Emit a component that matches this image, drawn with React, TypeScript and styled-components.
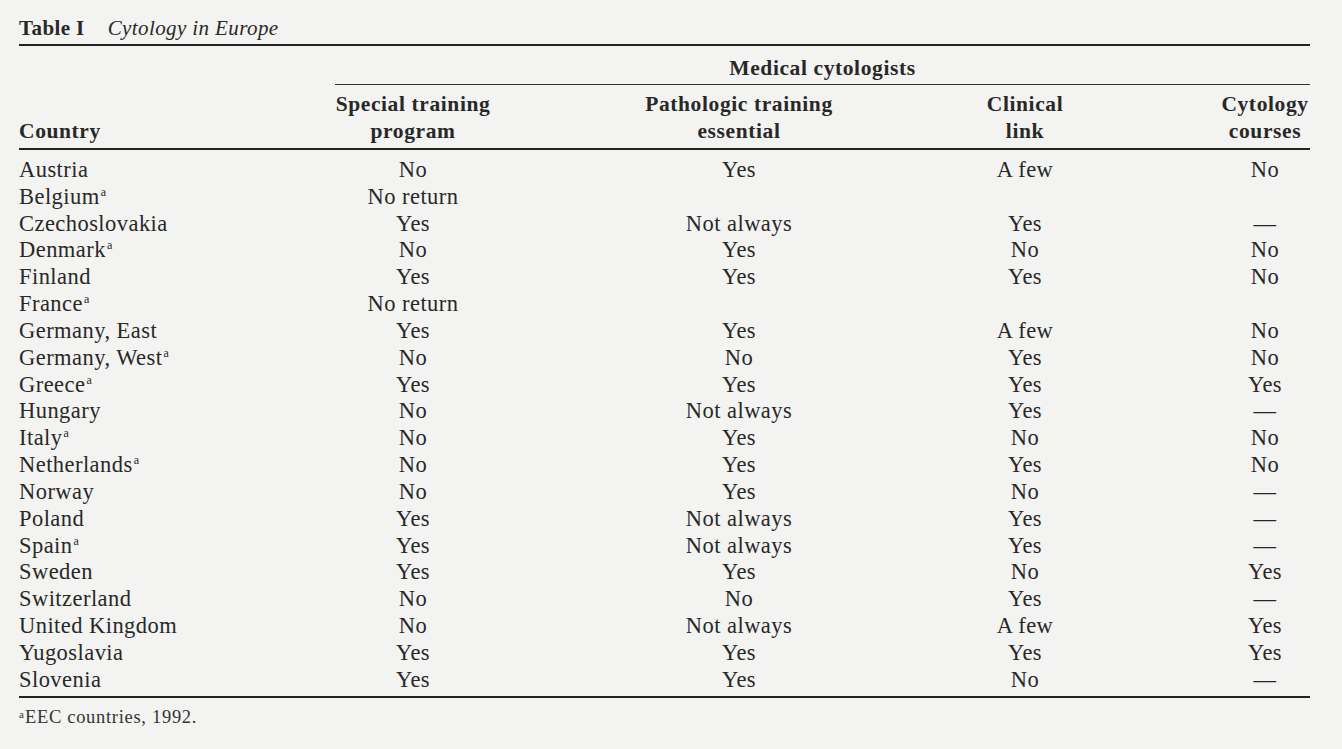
import React from "react";
import styled, { createGlobalStyle } from "styled-components";

const GlobalStyle = createGlobalStyle`
  html, body {
    margin: 0;
    padding: 0;
    background: #f3f3f1;
  }
  body {
    font-family: "Liberation Serif", "Times New Roman", serif;
    color: #282828;
  }
`;

const COLS = "294px 200px 452px 120px 225px";

const Page = styled.div`
  width: 1291px;
  padding: 16px 0 0 19px;
`;

const Caption = styled.div`
  font-size: 21px;
  line-height: 24px;
  letter-spacing: 0.4px;
  margin-bottom: 4px;
  b {
    font-weight: 700;
    margin-right: 23px;
  }
  i {
    font-style: italic;
  }
`;

const Table = styled.div`
  border-top: 2px solid #222;
  border-bottom: 2px solid #222;
`;

const SpanRow = styled.div`
  display: grid;
  grid-template-columns: ${COLS};
`;

const SpanHead = styled.div`
  grid-column: 2 / 6;
  margin-left: 22px;
  padding: 9px 0 2px;
  line-height: 27px;
  font-size: 21.5px;
  letter-spacing: 0.6px;
  font-weight: 700;
  text-align: center;
  border-bottom: 1px solid #333;
`;

const HeadRow = styled.div`
  display: grid;
  grid-template-columns: ${COLS};
  padding: 6px 0 3px;
  border-bottom: 2px solid #222;
  font-size: 21.5px;
  letter-spacing: 0.6px;
  font-weight: 700;
  line-height: 27px;
`;

const Body = styled.div`
  padding: 7px 0 2px;
`;

const Row = styled.div`
  display: grid;
  grid-template-columns: ${COLS};
  font-size: 22.5px;
  letter-spacing: 0.45px;
  line-height: 26.84px;
  height: 26.84px;
`;

const Cell = styled.div<{ $pos?: "left" | "center" | "end" }>`
  white-space: nowrap;
  text-align: ${(p) => (p.$pos === "left" ? "left" : "center")};
  align-self: end;
  ${(p) =>
    p.$pos === "end"
      ? `justify-self: end; min-width: 90px;`
      : ""}
`;

const Sup = styled.sup`
  font-size: 12px;
  line-height: 0;
  vertical-align: 0;
  position: relative;
  top: -8px;
  margin-left: 1px;
  letter-spacing: 0;
`;

const Footnote = styled.div`
  margin-top: 9px;
  font-size: 18.5px;
  letter-spacing: 0.7px;
  line-height: 20px;
  color: #333;
`;

const FootSup = styled.sup`
  font-size: 11px;
  line-height: 0;
  vertical-align: 0;
  position: relative;
  top: -5px;
  margin-right: 1px;
  letter-spacing: 0;
`;

type R = [string, boolean, string, string, string, string];

const rows: R[] = [
  ["Austria", false, "No", "Yes", "A few", "No"],
  ["Belgium", true, "No return", "", "", ""],
  ["Czechoslovakia", false, "Yes", "Not always", "Yes", "—"],
  ["Denmark", true, "No", "Yes", "No", "No"],
  ["Finland", false, "Yes", "Yes", "Yes", "No"],
  ["France", true, "No return", "", "", ""],
  ["Germany, East", false, "Yes", "Yes", "A few", "No"],
  ["Germany, West", true, "No", "No", "Yes", "No"],
  ["Greece", true, "Yes", "Yes", "Yes", "Yes"],
  ["Hungary", false, "No", "Not always", "Yes", "—"],
  ["Italy", true, "No", "Yes", "No", "No"],
  ["Netherlands", true, "No", "Yes", "Yes", "No"],
  ["Norway", false, "No", "Yes", "No", "—"],
  ["Poland", false, "Yes", "Not always", "Yes", "—"],
  ["Spain", true, "Yes", "Not always", "Yes", "—"],
  ["Sweden", false, "Yes", "Yes", "No", "Yes"],
  ["Switzerland", false, "No", "No", "Yes", "—"],
  ["United Kingdom", false, "No", "Not always", "A few", "Yes"],
  ["Yugoslavia", false, "Yes", "Yes", "Yes", "Yes"],
  ["Slovenia", false, "Yes", "Yes", "No", "—"],
];

export default function App() {
  return (
    <>
      <GlobalStyle />
      <Page>
        <Caption>
          <b>Table I</b>
          <i>Cytology in Europe</i>
        </Caption>
        <Table>
          <SpanRow>
            <SpanHead>Medical cytologists</SpanHead>
          </SpanRow>
          <HeadRow>
            <Cell $pos="left">Country</Cell>
            <Cell>
              Special training
              <br />
              program
            </Cell>
            <Cell>
              Pathologic training
              <br />
              essential
            </Cell>
            <Cell>
              Clinical
              <br />
              link
            </Cell>
            <Cell $pos="end">
              Cytology
              <br />
              courses
            </Cell>
          </HeadRow>
          <Body>
            {rows.map(([country, eec, a, b, c, d]) => (
              <Row key={country}>
                <Cell $pos="left">
                  {country}
                  {eec && <Sup>a</Sup>}
                </Cell>
                <Cell>{a}</Cell>
                <Cell>{b}</Cell>
                <Cell>{c}</Cell>
                <Cell $pos="end">{d}</Cell>
              </Row>
            ))}
          </Body>
        </Table>
        <Footnote>
          <FootSup>a</FootSup>EEC countries, 1992.
        </Footnote>
      </Page>
    </>
  );
}
